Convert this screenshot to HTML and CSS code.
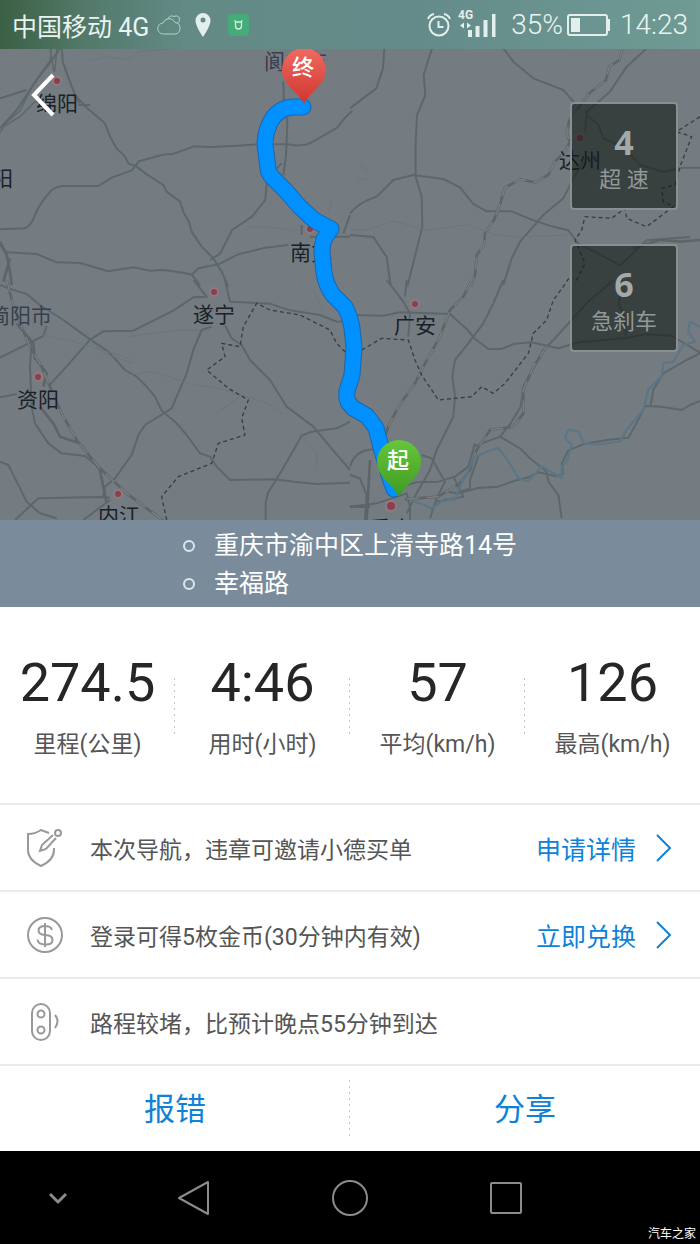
FILE: index.html
```html
<!DOCTYPE html>
<html lang="zh-CN">
<head>
    <meta charset="UTF-8">
    <meta name="viewport" content="width=device-width, initial-scale=1.0">
    <title>行程详情</title>
    <link rel="stylesheet" href="styles.css">
</head>
<body>
    <header class="status-bar">
        <span class="carrier">中国移动 4G</span>
        <div class="notices">
            <svg width="24" height="22" viewBox="0 0 24 22" fill="none" stroke="#b5cfca" stroke-width="1">
                <path d="M6.500 20a5.500 5.500 0 0 1-.5-11 6.500 6.500 0 0 1 12-.5 5.800 5.800 0 0 1 0 11.500z"/>
                <path d="M11 5a4 4 0 0 1 6-2.500 3.600 3.600 0 0 1 5 5q-.5 1.500-2 2"/>
            </svg>
            <svg width="20" height="26" viewBox="0 0 20 26" fill="#e3efec">
                <path fill-rule="evenodd" d="M10 1a7.500 7.500 0 0 0-7.500 7.500C2.500 14.500 10 25 10 25s7.500-10.500 7.500-16.500A7.500 7.500 0 0 0 10 1zm0 4.500a2.500 2.500 0 1 1 0 5 2.500 2.500 0 0 1 0-5z"/>
            </svg>
            <svg width="24" height="22" viewBox="0 0 24 22">
                <rect x="3" y="0" width="21" height="22" rx="4" fill="#45ab78"/>
                <path d="M9.500 6.500l2 1.500h4l2-1.500M10.500 8v4q0 3 3 3t3-3V8" fill="none" stroke="#d8f0e2" stroke-width="1.300"/>
            </svg>
        </div>
        <div class="system">
            <svg width="26" height="26" viewBox="0 0 26 26" fill="none" stroke="#e3efec" stroke-width="2">
                <circle cx="13" cy="14" r="9.500"/>
                <path d="M12.500 9v6h5M2 7q1.500-4 6-5M24 7q-1.500-4-6-5"/>
            </svg>
            <svg class="signal" width="40" height="30" viewBox="0 0 40 30" fill="#e3efec">
                <text x="1" y="9" class="signal-type">4G</text>
                <path d="M3 15.500l4-3v6zM14 15.500l-4-3v6zM11 20h4v7h-4zM18.500 16h4v11h-4zM26.500 10h4v17h-4zM35 4h3.500v23H35z"/>
            </svg>
            <span class="charge">35%</span>
            <svg class="battery" width="44" height="22" viewBox="0 0 44 22">
                <rect x="1" y="1" width="39" height="20" rx="2" fill="none" stroke="#e3efec" stroke-width="2"/>
                <rect x="4" y="4" width="9" height="14" fill="#e3efec"/>
                <path d="M41 5h2v12h-2z" fill="#e3efec"/>
            </svg>
            <time>14:23</time>
        </div>
    </header>

    <main>
        <section class="map">
            <svg class="map-canvas" viewBox="0 0 700 471" preserveAspectRatio="xMidYMid slice">
                <defs>
                    <linearGradient id="red-pin" x1="0" y1="0" x2="0" y2="1">
                        <stop offset="0" stop-color="#f06a60"/>
                        <stop offset="1" stop-color="#cf3630"/>
                    </linearGradient>
                    <linearGradient id="green-pin" x1="0" y1="0" x2="0" y2="1">
                        <stop offset="0" stop-color="#66c63c"/>
                        <stop offset="1" stop-color="#3f9a22"/>
                    </linearGradient>
                </defs>

                <!-- road network, four tiles drawn at 3x -->
                <g transform="scale(.33333)">
                    <g transform="translate(0 -12)">
                        <path class="road" d="M185 0L188 50 206 100 225 150 262 190 315 235 330 275 350 310 375 335 385 355 410 365 440 388 490 420 500 440 540 470 552 505 567 530 575 560 605 605 640 640 665 680 685 725"/>
                        <path class="road" d="M0 553l75-3q20-10 30-40 10-30 50-75 20-12 35-12h105l40-25 60-22 22-27 70-20 35-3 60-22 50 2 80-4 60-4h90q50 10 80-10l70-40q20-30 45-50"/>
                        <path class="road" d="M0 160l80-25M0 250l50-55 60-90 50-65 20-30"/>
                        <path class="road minor" d="M0 262l20-30 40-35 40-80 50-70 5-47M10 245l50-30 50-50M150 10l12 70M172 0l-8 80"/>
                        <path class="road" d="M240 175l-20-25M235 180h35M850 110l2 60 10 60-4 100-8 60M845 355l-30 30-15 30-4 50-40 50-60 40-35 70-30 20M575 690l20-20 60-12 60-30 80-20 70-8M0 600l20 22 90 5 60 25 70 2 85 25 75-12 50 10 40-2 60 8 25 6q15 18 25 32M905 570v-30M930 575h120M1050 510l-20 55"/>
                        <path class="road hair" d="M260 50l60-15 60 8 40-25 90-5M740 545l80 2 60 10M995 470l-10 30"/>
                        <path class="rail" d="M0 590l20 40 10 50 5 40M30 640l-20 70"/>
                    </g>
                    <g transform="translate(1050 -12)">
                        <path class="road" d="M103 10l-4 60-20 60-40 30-39 30M246 10l-25 80 5 60-25 60-4 80v105l18 60 2 90-25 100-20 80M460 10l30 40 60 50 90 35 35 40"/>
                        <path class="road" d="M890 10l-60 55-50 75-70 60-4 60M0 505q30-35 80-50l50-50 60-15 90 12 50 25 40 50 40 22h75l60 25 60 20 50 12 30 40 60 30 65 35 80-75 130-10"/>
                        <path class="road" d="M710 210l35 30 15 40 60 25 50 55 70 20 60-12h50M700 350l-30 50-30 60-60 50-70 80-25 50-25 80M0 570l70 6 40 60 12 84"/>
                        <path class="road hair" d="M0 555l60-2 70-25 100 28 100-14 30-2 70 28 70 8 150-6M30 360l25 20M20 410q10-10 30-8"/>
                        <path class="rail" d="M818 10L808 45 778 65 768 105 718 145 688 185 658 225 650 265 660 290 645 320 615 350 595 390 555 412 510 403 465 428 450 478 432 525 405 565 402 600 380 630 375 690 362 724"/>
                        <path class="rail-core" d="M818 10L808 45 778 65 768 105 718 145 688 185 658 225 650 265 660 290 645 320 615 350 595 390 555 412 510 403 465 428 450 478 432 525 405 565 402 600 380 630 375 690 362 724"/>
                        <path class="rail" d="M850 610l80-25 60 5 60-5"/>
                        <path class="border" d="M1050 215l-70 45 45 15-35 90-15 55-40 10 5 40 30 15-80 60-60-25-5-30-40 30-80-5-10 40-20 30 30 70-30 60"/>
                    </g>
                    <g transform="translate(0 693)">
                        <path class="road" d="M0 15L35 28 80 42 120 75 190 120 270 178 325 215 375 270 410 290 440 320 465 350 485 392 530 430 560 465 600 520 630 530 650 560 690 600 820 598 890 606 950 612 1050 608"/>
                        <path class="road" d="M580 0l40 50-40 2-60 40-120 60-90 2-40 25-70 80-50 55M675 0l15 65 120 6 60 20 90 14 50 20 40-3M635 140l-30 10-25 60-20 70-30 70-15 35-80 50-20 30-20 60-50 70-30 25-5 30"/>
                        <path class="road" d="M675 135l20 40 30 20 25 45 60 60 50 80 80 60 50 60 60 70M1050 425l-40 20-75 10-30 12-60 105-40 65-8 30v60"/>
                        <path class="road" d="M0 233l80-40 50-25 10-30M95 180l-5 80 5 120 10 50 40 60 40 30 70 8 50 40M0 352l50-10M0 545l25 10 25 50 30 60 40 35 50 15M45 720l70-65 180-4 35 2M250 720l80-60"/>
                        <path class="road hair" d="M130 165l90 20 170 50M270 180l40 40 90 30M380 285l80-10 120 40 70 8 100 30 60 20 40 30M380 170l160-20 60 2M940 30l35 80M900 460l50 60v40M650 400l70-50"/>
                        <path class="rail" d="M20 0L38 70 65 140 90 200 125 260 150 320 185 400 230 480 300 565 380 640 500 730M50 130l50 60 5 50M110 240l30 40-10 40M120 380l40 50 20 40 60 20 60 80 20 100"/>
                        <path class="rail-core" d="M20 0L38 70 65 140 90 200 125 260 150 320 185 400 230 480 300 565 380 640 500 730"/>
                        <path class="border" d="M500 720l-15-70 50-60 100-40 20-60 80-25-10-50 20-55-60-35-65-55 55-40-10-40 55 10 10-60 40-70 40 20 90 15 50 25 40 20 20 40 50 50"/>
                    </g>
                    <g transform="translate(1050 693)">
                        <path class="road" d="M110 0l50 65 20 35-5 70M170 0l-5 50M0 105l100 2 50-10 150 5 50 45 25 30 40 30h40l40-16 50-4 80 18 60-18 140-12 60-12 80 4 80 48 40 8 60 70"/>
                        <path class="road" d="M460 0l-30 70-30 60-45 60-40 50-8 50 8 60-5 60-50 100-20 60-40 70-30 60M1050 220l-40 20-70 40-30 50-8 45M885 378l50 2 60 10 25-15 30-12M885 378l-30 60-20 35-60 6-70 12-50 20-20 40 5 30-20 8-55-12-30 15-40 10-50 18-60 4-60 16-30-4M450 470l60 35 30 30 50 40 5 30 30 40 10 70"/>
                        <path class="road" d="M815 0l-8 75 20 40v55M790 0l-80 70-100 110-30 30-60 110-8 60-30 50-32 40-80 30M375 490l-20 70-40 30-50 15-65 2-40 10M0 585l30 10 20 50-5 75M0 560q15-50 70-52M0 680l80-10 90-30 10 40v40M215 525l30 10 40 70-25 50-20 60M310 590l30 60-80 15M385 530l-25 70 0 25-30 10"/>
                        <path class="rail" d="M365 0l-25 50-40 40-30 80-50 90-25 50-50 70-30 60-15 40M590 200l-40 60-30 70v70l-30 40-70 10-40 60-20 60-30 40-65 40-100 8M50 720l10-180M0 680h60"/>
                        <path class="rail-core" d="M365 0l-25 50-40 40-30 80-50 90-25 50-50 70-30 60M590 200l-40 60-30 70v70l-30 40-70 10-40 60-20 60-30 40-65 40-100 8"/>
                        <path class="river" d="M1050 140l-30-15-5 30 20 30-35 10-30 50-30 4-5 40-40 40-15 60-50 60-20 35-70 10-40-5-15-35-30-4-10 24 20 20-10 40-20 30 0 30-60-35-40 45-30-10-30-50-30-40-20 6-50 20-20 40-30 60-10 30-30-4-40 30-30-14-30-10"/>
                        <path class="border" d="M35 210l60-35 80 5 20 60 20 45 50 75 100-10 30-30 35 20 35-30 70-90 15-60 40-40 20-60 30-40 20-30"/>
                    </g>
                </g>

                <g class="marks">
                    <circle cx="57" cy="32" r="4"/>
                    <circle cx="310" cy="180" r="4"/>
                    <circle cx="580" cy="89" r="4"/>
                    <circle cx="214" cy="243" r="4"/>
                    <circle cx="415" cy="255" r="4"/>
                    <circle cx="38" cy="328" r="4"/>
                    <circle cx="118" cy="445" r="4"/>
                    <circle cx="391" cy="457" r="5"/>
                </g>

                <g class="cities">
                    <text x="36" y="62">绵阳</text>
                    <text x="-8" y="137">阳</text>
                    <text x="290" y="211">南充</text>
                    <text x="559" y="119">达州</text>
                    <text x="193" y="273">遂宁</text>
                    <text x="394" y="284">广安</text>
                    <text x="17" y="358">资阳</text>
                    <text x="98" y="474">内江</text>
                    <text x="370" y="487">重庆</text>
                    <text x="264" y="20" class="county">阆中市</text>
                    <text x="-11" y="274" class="county">简阳市</text>
                </g>

                <path class="route-edge" d="M303 58h-8q-9 0-15 4-7 5-10 12-5 10-5 22l3 23q0 4 4 9l13 13 15 17 14 13 17 9-7 10q-2 6-2 13l2 21q2 12 9 22l12 12q5 9 7 21l2 20-2 27-5 16q-1 6 1 11l5 6 14 8 9 12 6 23 8 27 4 11"/>
                <path class="route" d="M303 58h-8q-9 0-15 4-7 5-10 12-5 10-5 22l3 23q0 4 4 9l13 13 15 17 14 13 17 9-7 10q-2 6-2 13l2 21q2 12 9 22l12 12q5 9 7 21l2 20-2 27-5 16q-1 6 1 11l5 6 14 8 9 12 6 23 8 27 4 11"/>

                <path fill="url(#red-pin)" d="M304 55c-6-12-22-20-22-34a22 22 0 1 1 44 0c0 14-16 22-22 34z"/>
                <text class="pin-text" x="303" y="26">终</text>
                <path fill="url(#green-pin)" d="M399 448c-6-12-22-20-22-35a22 22 0 1 1 44 0c0 15-16 23-22 35z"/>
                <text class="pin-text" x="398" y="419">起</text>
            </svg>

            <button class="back" type="button" aria-label="返回">
                <svg width="24" height="44" viewBox="0 0 24 44" fill="none" stroke="#fff" stroke-width="4">
                    <path d="M22 2L3 22l19 20"/>
                </svg>
            </button>

            <div class="events">
                <div class="event"><strong>4</strong><span>超 速</span></div>
                <div class="event"><strong>6</strong><span>急刹车</span></div>
            </div>
        </section>

        <section class="places">
            <ul>
                <li>重庆市渝中区上清寺路14号</li>
                <li>幸福路</li>
            </ul>
        </section>

        <section class="stats">
            <div class="stat"><strong>274.5</strong><span>里程(公里)</span></div>
            <div class="stat"><strong>4:46</strong><span>用时(小时)</span></div>
            <div class="stat"><strong>57</strong><span>平均(km/h)</span></div>
            <div class="stat"><strong>126</strong><span>最高(km/h)</span></div>
        </section>

        <section class="rows">
            <div class="row">
                <svg class="row-icon" width="36" height="38" viewBox="0 0 36 38">
                    <path d="M22 4l-8-3Q8 5 1 5v16q0 10 13 16 13-6 13-16v-2"/>
                    <path d="M26 6L15 16l-2 6 6-2L29 9"/>
                    <circle cx="31" cy="4" r="3"/>
                </svg>
                <p>本次导航，违章可邀请小德买单</p>
                <a href="#">申请详情
                    <svg width="18" height="28" viewBox="0 0 18 28"><path d="M2 1l13 13L2 27"/></svg>
                </a>
            </div>
            <div class="row">
                <svg class="row-icon" width="36" height="38" viewBox="0 0 36 38">
                    <circle cx="18" cy="19" r="17"/>
                    <path d="M18 7v24M25 14q-1-4-7-4-6.500 0-6.500 4.500 0 4 6.500 4.500 7.500 0 7.500 5T18 28.500q-7 0-7.500-5"/>
                </svg>
                <p>登录可得5枚金币(30分钟内有效)</p>
                <a href="#">立即兑换
                    <svg width="18" height="28" viewBox="0 0 18 28"><path d="M2 1l13 13L2 27"/></svg>
                </a>
            </div>
            <div class="row">
                <svg class="row-icon" width="36" height="38" viewBox="0 0 36 38">
                    <rect x="5" y="1" width="18" height="36" rx="9"/>
                    <circle cx="14" cy="11" r="3.500"/>
                    <circle cx="14" cy="27" r="3.500"/>
                    <path d="M28 12q5 6 0 13"/>
                </svg>
                <p>路程较堵，比预计晚点55分钟到达</p>
            </div>
        </section>

        <div class="actions">
            <button type="button">报错</button>
            <button type="button">分享</button>
        </div>
    </main>

    <nav class="nav-bar">
        <button type="button" aria-label="收起">
            <svg width="20" height="36" viewBox="0 0 20 36"><path stroke-width="3" d="M2 14l8 8 8-8"/></svg>
        </button>
        <button type="button" aria-label="后退">
            <svg width="36" height="36" viewBox="0 0 36 36"><path d="M32 2v32L3 18z"/></svg>
        </button>
        <button type="button" aria-label="主屏幕">
            <svg width="36" height="36" viewBox="0 0 36 36"><circle cx="18" cy="18" r="17"/></svg>
        </button>
        <button type="button" aria-label="最近任务">
            <svg width="36" height="36" viewBox="0 0 36 36"><rect x="3" y="3" width="30" height="30" rx="1"/></svg>
        </button>
        <span class="watermark">汽车之家</span>
    </nav>
</body>
</html>
```
FILE: styles.css
```css
*,
*::before {
    box-sizing: border-box;
}

body {
    margin: 0;
    background: #fff;
    color: #555;
    font-family: Roboto, "Noto Sans CJK SC", sans-serif;
    font-size: 23px;
}

button {
    padding: 0;
    border: none;
    background: none;
    font-family: inherit;
    cursor: pointer;
}

svg {
    display: block;
}

/* status bar */
.status-bar {
    display: flex;
    align-items: center;
    height: 49px;
    padding: 0 12px;
    background: linear-gradient(to right, #3c6044, #52796a 12%, #648a86 27%, #648b8a 60%, #6f9b94);
    color: #e9f3f1;
    font-size: 25px;
}

.notices {
    display: flex;
    align-items: center;
    gap: 12px;
    margin-left: 8px;
}

.system {
    display: flex;
    align-items: center;
    margin-left: auto;
    font-size: 28px;
    font-weight: 300;
}

.signal {
    margin: 0 14px 0 5px;
}

.signal-type {
    font-size: 12px;
    font-weight: bold;
}

.battery {
    margin: 0 9px 0 4px;
}

/* map */
.map {
    position: relative;
    height: 471px;
    overflow: hidden;
    background: #747c82;
}

.map-canvas {
    width: 100%;
    height: 100%;
}

.road,
.rail,
.rail-core,
.river,
.border {
    fill: none;
    stroke-linejoin: round;
}

.road {
    stroke: #5d676b;
    stroke-width: 6;
}

.minor {
    stroke-width: 4;
}

.hair {
    stroke: #6c7579;
    stroke-width: 3;
}

.rail {
    stroke: #5f6567;
    stroke-width: 8;
}

.rail-core {
    stroke: #7b8283;
    stroke-width: 4;
    stroke-dasharray: 36 24;
}

.river {
    stroke: #5d7686;
    stroke-width: 7;
}

.border {
    stroke: #363f45;
    stroke-width: 4;
    stroke-dasharray: 12 9;
}

.marks circle {
    fill: #8b3f4d;
    stroke: #8f7a80;
    stroke-width: 2;
}

.cities {
    fill: #1a2127;
    font-size: 21px;
}

.county {
    fill: #363f4c;
}

.route-edge,
.route {
    fill: none;
    stroke: #1d66ab;
    stroke-width: 17;
    stroke-linecap: round;
    stroke-linejoin: round;
}

.route {
    stroke: #0090ff;
    stroke-width: 15;
}

.pin-text {
    fill: #fff;
    font-size: 22px;
    font-weight: 500;
    text-anchor: middle;
}

.back {
    position: absolute;
    top: 24px;
    left: 31px;
}

.events {
    position: absolute;
    top: 53px;
    right: 22px;
    display: grid;
    gap: 34px;
}

.event {
    display: flex;
    flex-direction: column;
    align-items: center;
    justify-content: center;
    width: 108px;
    height: 108px;
    padding-top: 6px;
    border: 2px solid #899092;
    border-radius: 4px;
    background: rgba(20, 28, 24, 0.62);
    color: #939998;
    font-size: 22px;
    line-height: 34px;
}

.event strong {
    color: #a3a9aa;
    font-family: "Open Sans", sans-serif;
    font-size: 34px;
    line-height: 42px;
}

/* start and end */
.places {
    padding: 7px 0 4px;
    background: #7a8c9b;
    color: #fff;
    font-size: 25px;
    line-height: 38px;
}

.places ul {
    width: fit-content;
    margin: 0 auto;
    padding: 0;
    list-style: none;
}

.places li {
    display: flex;
    align-items: center;
    gap: 19px;
}

.places li::before {
    content: "";
    width: 12px;
    height: 12px;
    border: 2px solid #dde6ee;
    border-radius: 50%;
}

/* trip numbers */
.stats {
    display: grid;
    grid-template-columns: repeat(4, 1fr);
}

.stat,
.actions button:first-child {
    background-image: repeating-linear-gradient(#c4c4c4 0 2px, transparent 2px 6px);
    background-repeat: no-repeat;
    background-size: 1px 58px;
}

.stat {
    display: flex;
    flex-direction: column;
    align-items: center;
    gap: 8px;
    padding: 45px 0 36px;
    background-position: right 71px;
    line-height: 45px;
}

.stat:last-child {
    background-image: none;
}

.stat strong {
    color: #262626;
    font-size: 54px;
    font-weight: 400;
    line-height: 62px;
}

/* notice rows */
.row {
    display: flex;
    align-items: center;
    gap: 27px;
    height: 87px;
    padding: 0 27px;
    border-top: 2px solid #ebebeb;
}

.row p {
    flex: 1;
    margin: 0;
}

.row-icon {
    fill: none;
    stroke: #999;
    stroke-width: 2;
}

.row a {
    display: flex;
    align-items: center;
    gap: 19px;
    color: #0d82d8;
    font-size: 25px;
    text-decoration: none;
}

.row a svg {
    fill: none;
    stroke: #0d82d8;
    stroke-width: 2;
}

.actions {
    display: grid;
    grid-template-columns: 1fr 1fr;
    height: 87px;
    border-top: 2px solid #ebebeb;
}

.actions button {
    padding-bottom: 5px;
    color: #0d82d8;
    font-size: 31px;
}

.actions button:first-child {
    background-position: right 14px;
}

/* system navigation */
.nav-bar {
    position: relative;
    display: grid;
    grid-template-columns: 3fr 4fr 4fr 4fr 3fr;
    height: 93px;
    background: #000;
}

.nav-bar button {
    display: flex;
    align-items: center;
    justify-content: center;
}

.nav-bar svg {
    fill: none;
    stroke: #8c8c8c;
    stroke-width: 2;
    stroke-linejoin: round;
}

.watermark {
    position: absolute;
    right: 4px;
    bottom: 2px;
    color: #fff;
    font-size: 12px;
    line-height: 16px;
}
```
